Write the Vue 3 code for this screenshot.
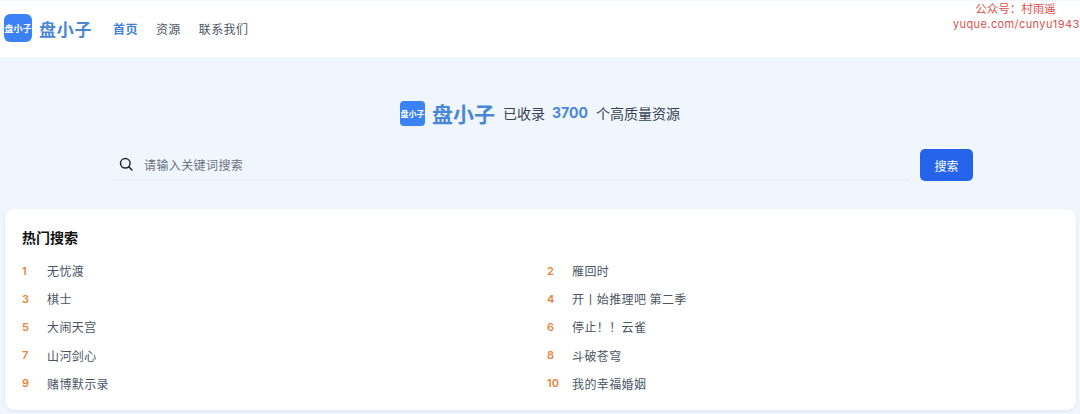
<script setup>
const nav = [
  { label: '首页', active: true },
  { label: '资源', active: false },
  { label: '联系我们', active: false },
]
const items = ['无忧渡', '雁回时', '棋士', '开丨始推理吧 第二季', '大闹天宫', '停止！！云雀', '山河剑心', '斗破苍穹', '赌博默示录', '我的幸福婚姻']
</script>

<template>
  <div class="page">
    <header class="header">
      <div class="logo-box">盘小子</div>
      <span class="brand">盘小子</span>
      <nav class="nav">
        <a v-for="n in nav" :key="n.label" :class="{ active: n.active }">{{ n.label }}</a>
      </nav>
    </header>
    <div class="watermark">
      <div>公众号：村雨遥</div>
      <div class="wm-url">yuque.com/cunyu1943</div>
    </div>
    <section class="hero">
      <div class="headline">
        <div class="logo-box small">盘小子</div>
        <span class="brand big">盘小子</span>
        <span class="stat">已收录</span>
        <span class="num">3700</span>
        <span class="stat">个高质量资源</span>
      </div>
      <div class="search">
        <div class="input">
          <svg width="14" height="14" viewBox="0 0 14 14" fill="none" stroke="#1f2937" stroke-width="1.5" stroke-linecap="round">
            <circle cx="6.3" cy="6.3" r="4.8" />
            <path d="M9.9 9.9 L13 13" />
          </svg>
          <span class="placeholder">请输入关键词搜索</span>
        </div>
        <button class="btn">搜索</button>
      </div>
    </section>
    <section class="card">
      <h2 class="title">热门搜索</h2>
      <ul class="grid">
        <li v-for="(t, i) in items" :key="t" class="row">
          <span class="rank">{{ i + 1 }}</span>
          <span class="name">{{ t }}</span>
        </li>
      </ul>
    </section>
  </div>
</template>

<style>
html, body { margin: 0; background: #f0f6fe; overflow: hidden; }
</style>

<style scoped>
.page {
  position: relative;
  width: 1080px;
  height: 414px;
  overflow: hidden;
  background: #f0f6fe;
  font-family: "Noto Sans CJK SC", "Inter", sans-serif;
}
.header {
  height: 56px;
  margin-top: 1px;
  background: #fff;
  display: flex;
  align-items: center;
  padding: 0 0 2px 4px;
  box-sizing: border-box;
}
.logo-box {
  width: 28px;
  height: 28px;
  border-radius: 6px;
  background: #3b82f6;
  color: #fff;
  font-size: 9px;
  font-weight: 700;
  display: flex;
  align-items: center;
  justify-content: center;
  white-space: nowrap;
}
.logo-box.small {
  width: 25px;
  height: 25px;
  font-size: 8px;
  border-radius: 4px;
  align-self: flex-end;
  margin-bottom: -1px;
}
.brand {
  margin-left: 7px;
  font-size: 17px;
  font-weight: 700;
  color: #4a86d8;
  letter-spacing: 0.7px;
}
.brand.big {
  margin-left: 7px;
  font-size: 21px;
  letter-spacing: 0;
}
.nav {
  display: flex;
  gap: 18px;
  margin-left: 21px;
  font-size: 12px;
  letter-spacing: 0.4px;
  color: #4b5563;
}
.nav .active {
  color: #3f7fd6;
  font-weight: 700;
}
.watermark {
  position: absolute;
  top: 1px;
  right: 2px;
  width: 125px;
  text-align: center;
  color: #d9534f;
  font-size: 11.5px;
  line-height: 15px;
  white-space: nowrap;
}
.wm-url {
  font-family: "Inter", sans-serif;
  font-size: 11px;
  letter-spacing: 0.4px;
  line-height: 17px;
}
.hero {
  padding-top: 44px;
}
.headline {
  display: flex;
  align-items: center;
  justify-content: center;
  height: 25px;
  margin-top: -1px;
}
.stat {
  font-size: 14px;
  color: #374151;
  margin-left: 8px;
}
.num {
  font-family: "Inter", sans-serif;
  font-size: 14px;
  font-weight: 700;
  color: #4a86d8;
  margin-left: 7px;
}
.search {
  display: flex;
  margin: 24px 107px 0 112px;
  gap: 10px;
  height: 32px;
  align-items: stretch;
}
.input {
  flex: 1;
  display: flex;
  align-items: center;
  padding-left: 7px;
  gap: 11px;
  border-bottom: 2px solid #eaf0f7;
  box-sizing: border-box;
}
.placeholder {
  font-size: 12px;
  color: #6b7280;
  letter-spacing: 0.4px;
}
.btn {
  width: 53px;
  border: 0;
  padding: 0;
  border-radius: 5px;
  background: #2563eb;
  color: #fff;
  font-family: inherit;
  font-size: 12px;
}
.card {
  margin: 28px 4px 0 5px;
  height: 201px;
  box-sizing: border-box;
  background: #fff;
  border-radius: 9px;
  padding: 19px 18px 0 17px;
  box-shadow: 0 1px 3px rgba(100, 116, 139, 0.12);
}
.title {
  margin: 0;
  font-size: 14px;
  font-weight: 700;
  color: #111;
  line-height: 19px;
}
.grid {
  list-style: none;
  margin: 9.5px 0 0;
  padding: 0;
  display: grid;
  grid-template-columns: 525px 1fr;
  grid-auto-rows: 28.2px;
}
.row {
  display: flex;
  align-items: center;
  font-size: 12px;
}
.rank {
  width: 25px;
  font-family: "Inter", sans-serif;
  font-size: 11px;
  font-weight: 600;
  color: #e5853b;
}
.name {
  color: #4b5563;
  letter-spacing: 0.4px;
}
</style>
